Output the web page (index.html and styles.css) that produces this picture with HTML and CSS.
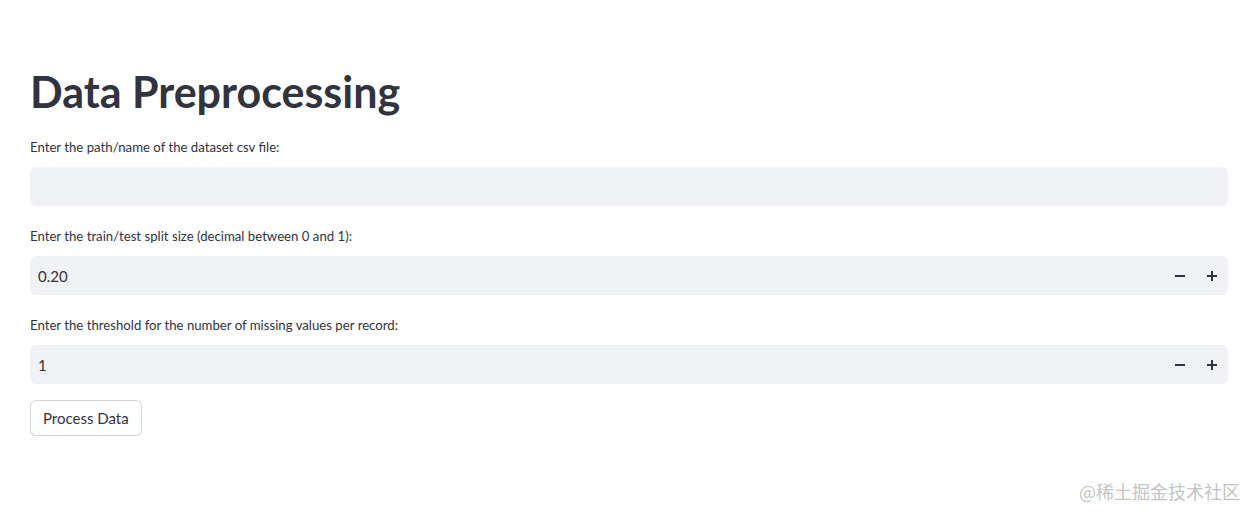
FILE: index.html
```html
<!DOCTYPE html>
<html lang="en">
<head>
<meta charset="utf-8">
<title>Data Preprocessing</title>
<link rel="stylesheet" href="styles.css">
</head>
<body>
<main class="app">
  <h1 class="title">Data Preprocessing</h1>
  <div class="widget">
    <label class="label">Enter the path/name of the dataset csv file:</label>
    <div class="field"><input class="input" type="text" value=""></div>
  </div>
  <div class="widget">
    <label class="label">Enter the train/test split size (decimal between 0 and 1):</label>
    <div class="field">
      <input class="input" type="text" value="0.20">
      <button class="step" aria-label="decrement"><svg width="10" height="10" viewBox="0 0 10 10"><rect x="0" y="4" width="10" height="2" fill="#31333f"/></svg></button>
      <button class="step" aria-label="increment"><svg width="10" height="10" viewBox="0 0 10 10"><rect x="0" y="4" width="10" height="2" fill="#31333f"/><rect x="4" y="0" width="2" height="10" fill="#31333f"/></svg></button>
    </div>
  </div>
  <div class="widget">
    <label class="label">Enter the threshold for the number of missing values per record:</label>
    <div class="field">
      <input class="input" type="text" value="1">
      <button class="step" aria-label="decrement"><svg width="10" height="10" viewBox="0 0 10 10"><rect x="0" y="4" width="10" height="2" fill="#31333f"/></svg></button>
      <button class="step" aria-label="increment"><svg width="10" height="10" viewBox="0 0 10 10"><rect x="0" y="4" width="10" height="2" fill="#31333f"/><rect x="4" y="0" width="2" height="10" fill="#31333f"/></svg></button>
    </div>
  </div>
  <div class="actions">
    <button class="btn">Process Data</button>
  </div>
</main>
<div class="watermark">@稀土掘金技术社区</div>
</body>
</html>
```

FILE: styles.css
```css
html, body {
  margin: 0;
  padding: 0;
  background: #ffffff;
}
body {
  font-family: Lato, "Noto Sans", sans-serif;
  color: #31333f;
  width: 1256px;
  height: 517px;
  overflow: hidden;
  position: relative;
}
.app {
  display: flex;
  flex-direction: column;
  gap: 16px;
  padding: 65px 28px 0 30px;
}
.title {
  margin: 0 0 -1px 0;
  font-size: 43px;
  line-height: 53px;
  font-weight: 700;
  color: #31333f;
}
.widget {
  display: flex;
  flex-direction: column;
  gap: 8px;
}
.label {
  font-size: 13.2px;
  line-height: 24px;
  height: 24px;
  padding-top: 2px;
}
.field {
  display: flex;
  height: 39px;
  background: #f0f2f6;
  border-radius: 6px;
}
.input {
  flex: 1;
  min-width: 0;
  border: none;
  background: transparent;
  font-family: inherit;
  font-size: 15px;
  color: #31333f;
  padding: 0 8px;
  outline: none;
}
.step {
  width: 32px;
  border: none;
  background: transparent;
  padding: 0;
  display: flex;
  align-items: center;
  justify-content: center;
}
.actions {
  display: flex;
}
.btn {
  font-family: inherit;
  font-size: 15px;
  color: #31333f;
  background: #ffffff;
  border: 1px solid rgba(49, 51, 63, 0.2);
  border-radius: 6px;
  height: 36px;
  padding: 0 12px;
}
.watermark {
  position: absolute;
  right: 16px;
  bottom: 15px;
  font-family: "Noto Sans CJK SC", sans-serif;
  font-size: 18px;
  color: #c4c4c4;
  line-height: 22px;
}
```
